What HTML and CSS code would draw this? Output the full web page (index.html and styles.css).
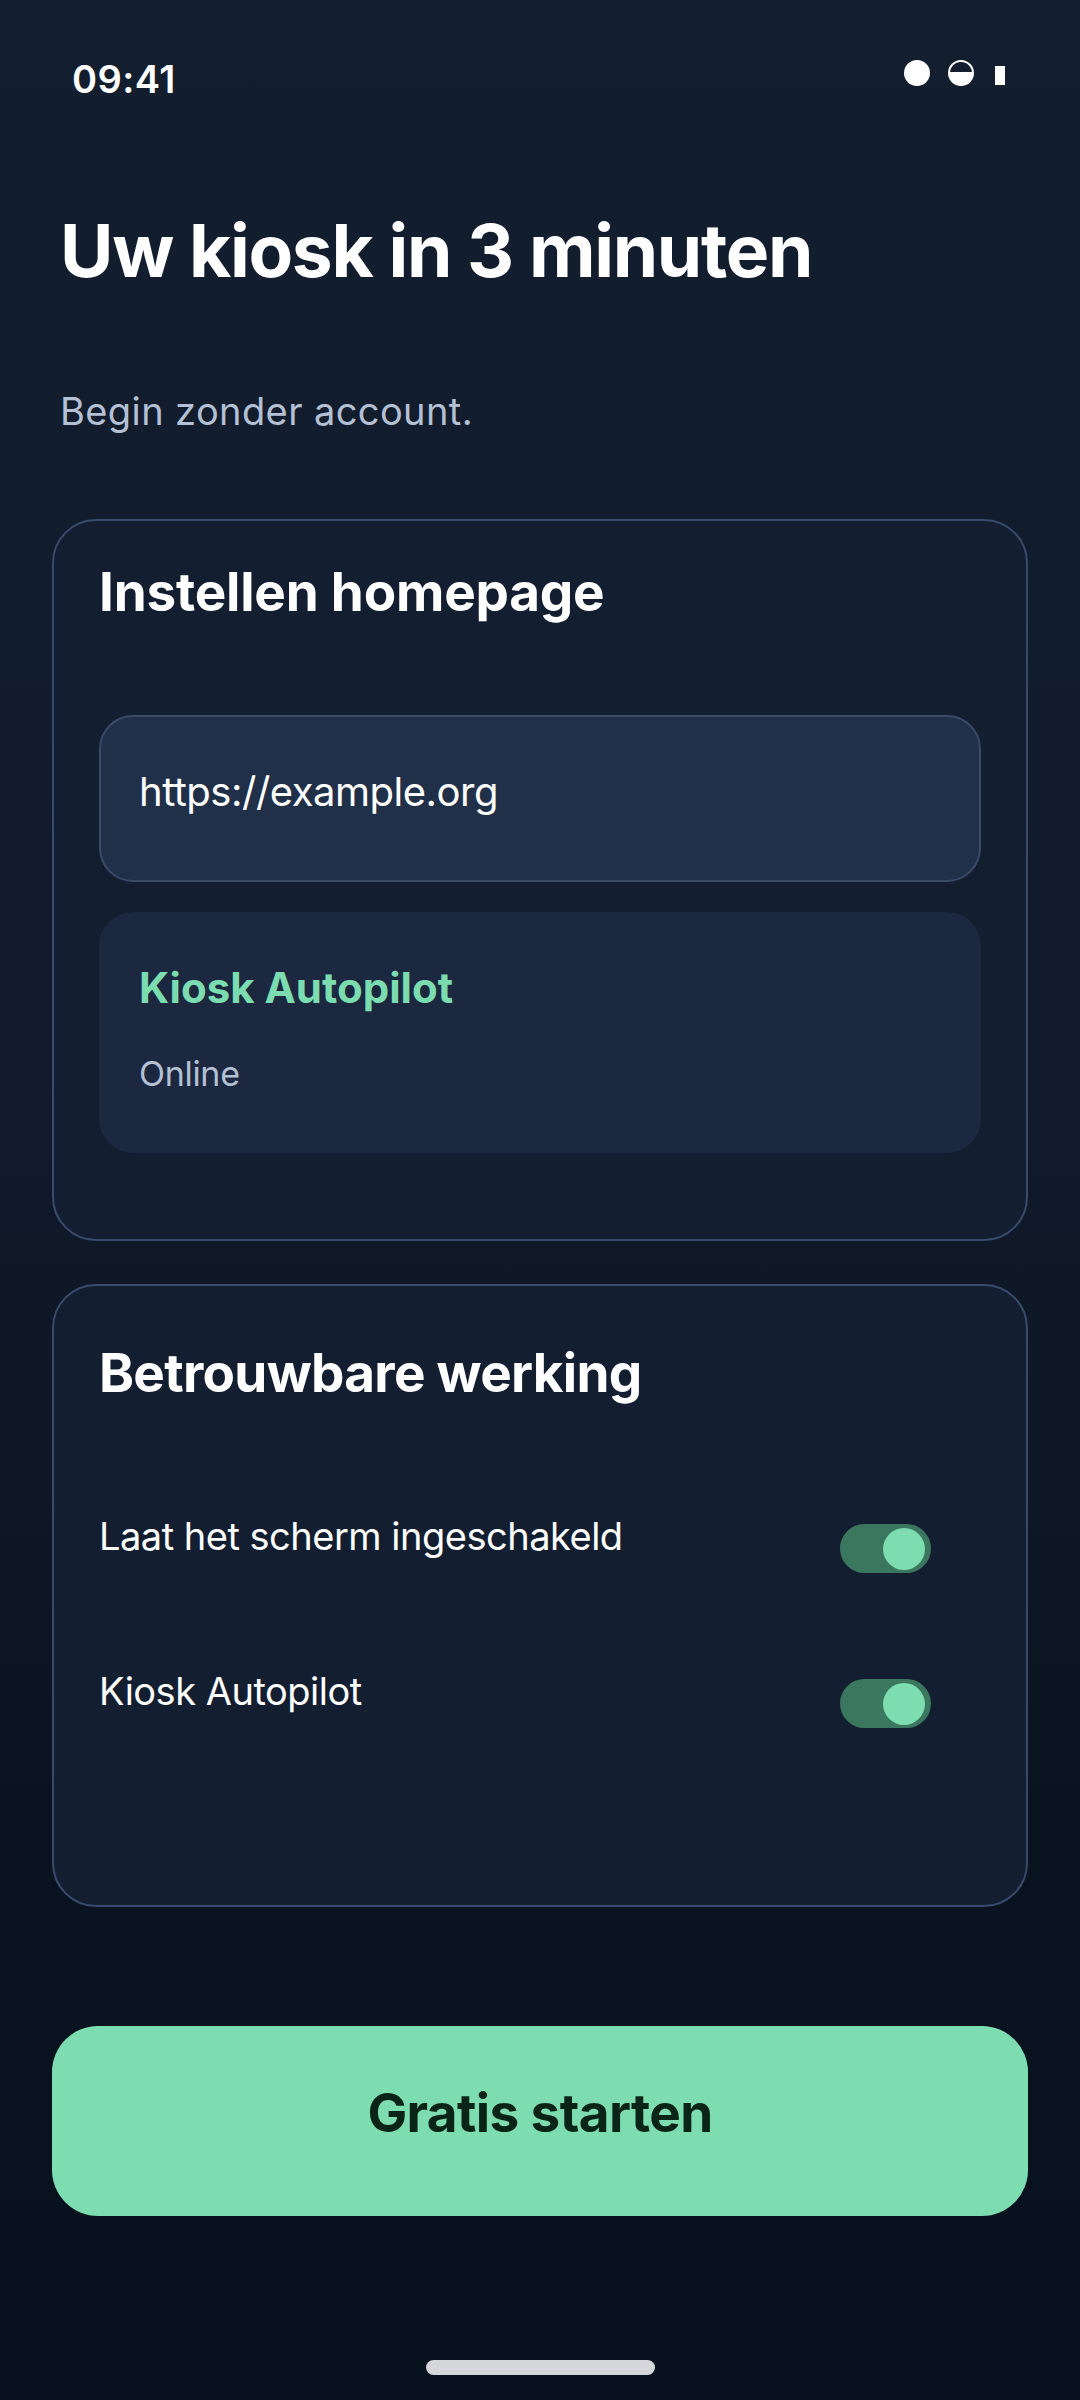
FILE: index.html
```html
<!DOCTYPE html>
<html lang="nl">
<head>
<meta charset="utf-8">
<meta name="viewport" content="width=1080">
<title>Uw kiosk in 3 minuten</title>
<link rel="stylesheet" href="styles.css">
</head>
<body>
<div class="screen">
  <header class="status-bar">
    <span class="time">09:41</span>
    <div class="status-icons">
      <span class="dot"></span>
      <span class="half"></span>
      <span class="bar"></span>
    </div>
  </header>

  <section class="intro">
    <h1 class="title">Uw kiosk in 3 minuten</h1>
    <p class="subtitle">Begin zonder account.</p>
  </section>

  <section class="card card-home">
    <h2 class="card-title">Instellen homepage</h2>
    <div class="url-field">https://example.org</div>
    <div class="status-box">
      <div class="status-name">Kiosk Autopilot</div>
      <div class="status-state">Online</div>
    </div>
  </section>

  <section class="card card-reliable">
    <h2 class="card-title">Betrouwbare werking</h2>
    <div class="rows">
      <div class="row">
        <span class="row-label">Laat het scherm ingeschakeld</span>
        <span class="toggle"><span class="knob"></span></span>
      </div>
      <div class="row">
        <span class="row-label">Kiosk Autopilot</span>
        <span class="toggle"><span class="knob"></span></span>
      </div>
    </div>
  </section>

  <button class="cta">Gratis starten</button>

  <div class="home-bar"><span class="home-indicator"></span></div>
</div>
</body>
</html>
```

FILE: styles.css
```css
* { box-sizing: border-box; }

html, body {
  margin: 0;
  padding: 0;
}

body {
  width: 1080px;
  height: 2400px;
  background: linear-gradient(180deg, #131e2f 0%, #101a2a 45%, #0a1421 75%, #08121e 100%);
  font-family: Inter, "Noto Sans", "Liberation Sans", sans-serif;
  color: #ffffff;
}

.screen {
  display: flex;
  flex-direction: column;
  height: 2400px;
  padding: 0 52px;
}

/* Status bar */
.status-bar {
  display: flex;
  justify-content: space-between;
  align-items: center;
  padding: 60px 23px 0 20px;
  height: 98px;
}

.time {
  font-size: 38px;
  line-height: 38px;
  font-weight: 600;
  letter-spacing: 0.4px;
  align-self: flex-start;
}

.status-icons {
  display: flex;
  align-items: center;
  gap: 18px;
  margin-top: -12px;
}

.dot {
  width: 26px;
  height: 26px;
  border-radius: 50%;
  background: #ffffff;
}

.half {
  width: 26px;
  height: 26px;
  border-radius: 50%;
  border: 2px solid #ffffff;
  background: linear-gradient(180deg, transparent 0 45%, #ffffff 45% 100%);
}

.bar {
  width: 10px;
  height: 19px;
  background: #ffffff;
  margin-left: 3px;
  margin-top: 4px;
}

/* Intro */
.intro {
  padding-left: 8px;
}

.title {
  margin: 116px 0 0;
  font-size: 73px;
  line-height: 73px;
  font-weight: 700;
  letter-spacing: -1.3px;
}

.subtitle {
  margin: 105px 0 0;
  font-size: 38px;
  line-height: 38px;
  font-weight: 400;
  color: #b4c0d4;
  letter-spacing: 0.4px;
}

/* Cards */
.card {
  border: 2px solid #394b6d;
  border-radius: 44px;
  background: #141e31;
  padding: 45px 45px 86px;
}

.card-home {
  margin-top: 89px;
}

.card-reliable {
  margin-top: 43px;
  padding-top: 61px;
  padding-bottom: 177px;
}

.card-title {
  margin: 0;
  font-size: 53px;
  line-height: 52px;
  font-weight: 700;
  letter-spacing: -0.2px;
}

.card-reliable .card-title {
  letter-spacing: -0.7px;
}

.url-field {
  margin-top: 97px;
  height: 167px;
  border: 2px solid #3a4a68;
  border-radius: 34px;
  background: #213049;
  padding: 55px 38px 0;
  font-size: 40px;
  line-height: 40px;
  color: #ffffff;
  letter-spacing: -0.5px;
}

.status-box {
  margin-top: 30px;
  height: 241px;
  border-radius: 34px;
  background: #1b2840;
  padding: 55px 40px 0;
}

.status-name {
  font-size: 42px;
  line-height: 42px;
  font-weight: 700;
  color: #7bdcb0;
  letter-spacing: 0;
}

.status-state {
  margin-top: 48px;
  font-size: 34px;
  line-height: 34px;
  color: #b4c0d4;
  letter-spacing: -0.3px;
}

/* Rows */
.rows {
  display: flex;
  flex-direction: column;
  gap: 99px;
  margin-top: 118px;
}

.row {
  display: flex;
  justify-content: space-between;
  align-items: flex-start;
  padding-right: 50px;
}

.row-label {
  font-size: 38px;
  line-height: 38px;
  letter-spacing: -0.5px;
}

.toggle {
  display: flex;
  justify-content: flex-end;
  align-items: center;
  width: 91px;
  height: 49px;
  margin-top: 7px;
  padding: 0 6px 0 4px;
  border-radius: 25px;
  background: #3b765f;
}

.knob {
  width: 42px;
  height: 42px;
  border-radius: 50%;
  background: #7ddcb0;
}

/* CTA */
.cta {
  margin-top: 119px;
  height: 190px;
  width: 100%;
  border: none;
  border-radius: 46px;
  background: #7ddcb0;
  color: #0a2417;
  font-family: Inter, "Noto Sans", "Liberation Sans", sans-serif;
  font-size: 53px;
  line-height: 53px;
  font-weight: 700;
  letter-spacing: -0.6px;
  padding: 0 0 16px;
}

.home-bar {
  margin-top: auto;
  display: flex;
  justify-content: center;
  padding-bottom: 25px;
}

.home-indicator {
  width: 229px;
  height: 15px;
  border-radius: 8px;
  background: #d4d6da;
}
```
